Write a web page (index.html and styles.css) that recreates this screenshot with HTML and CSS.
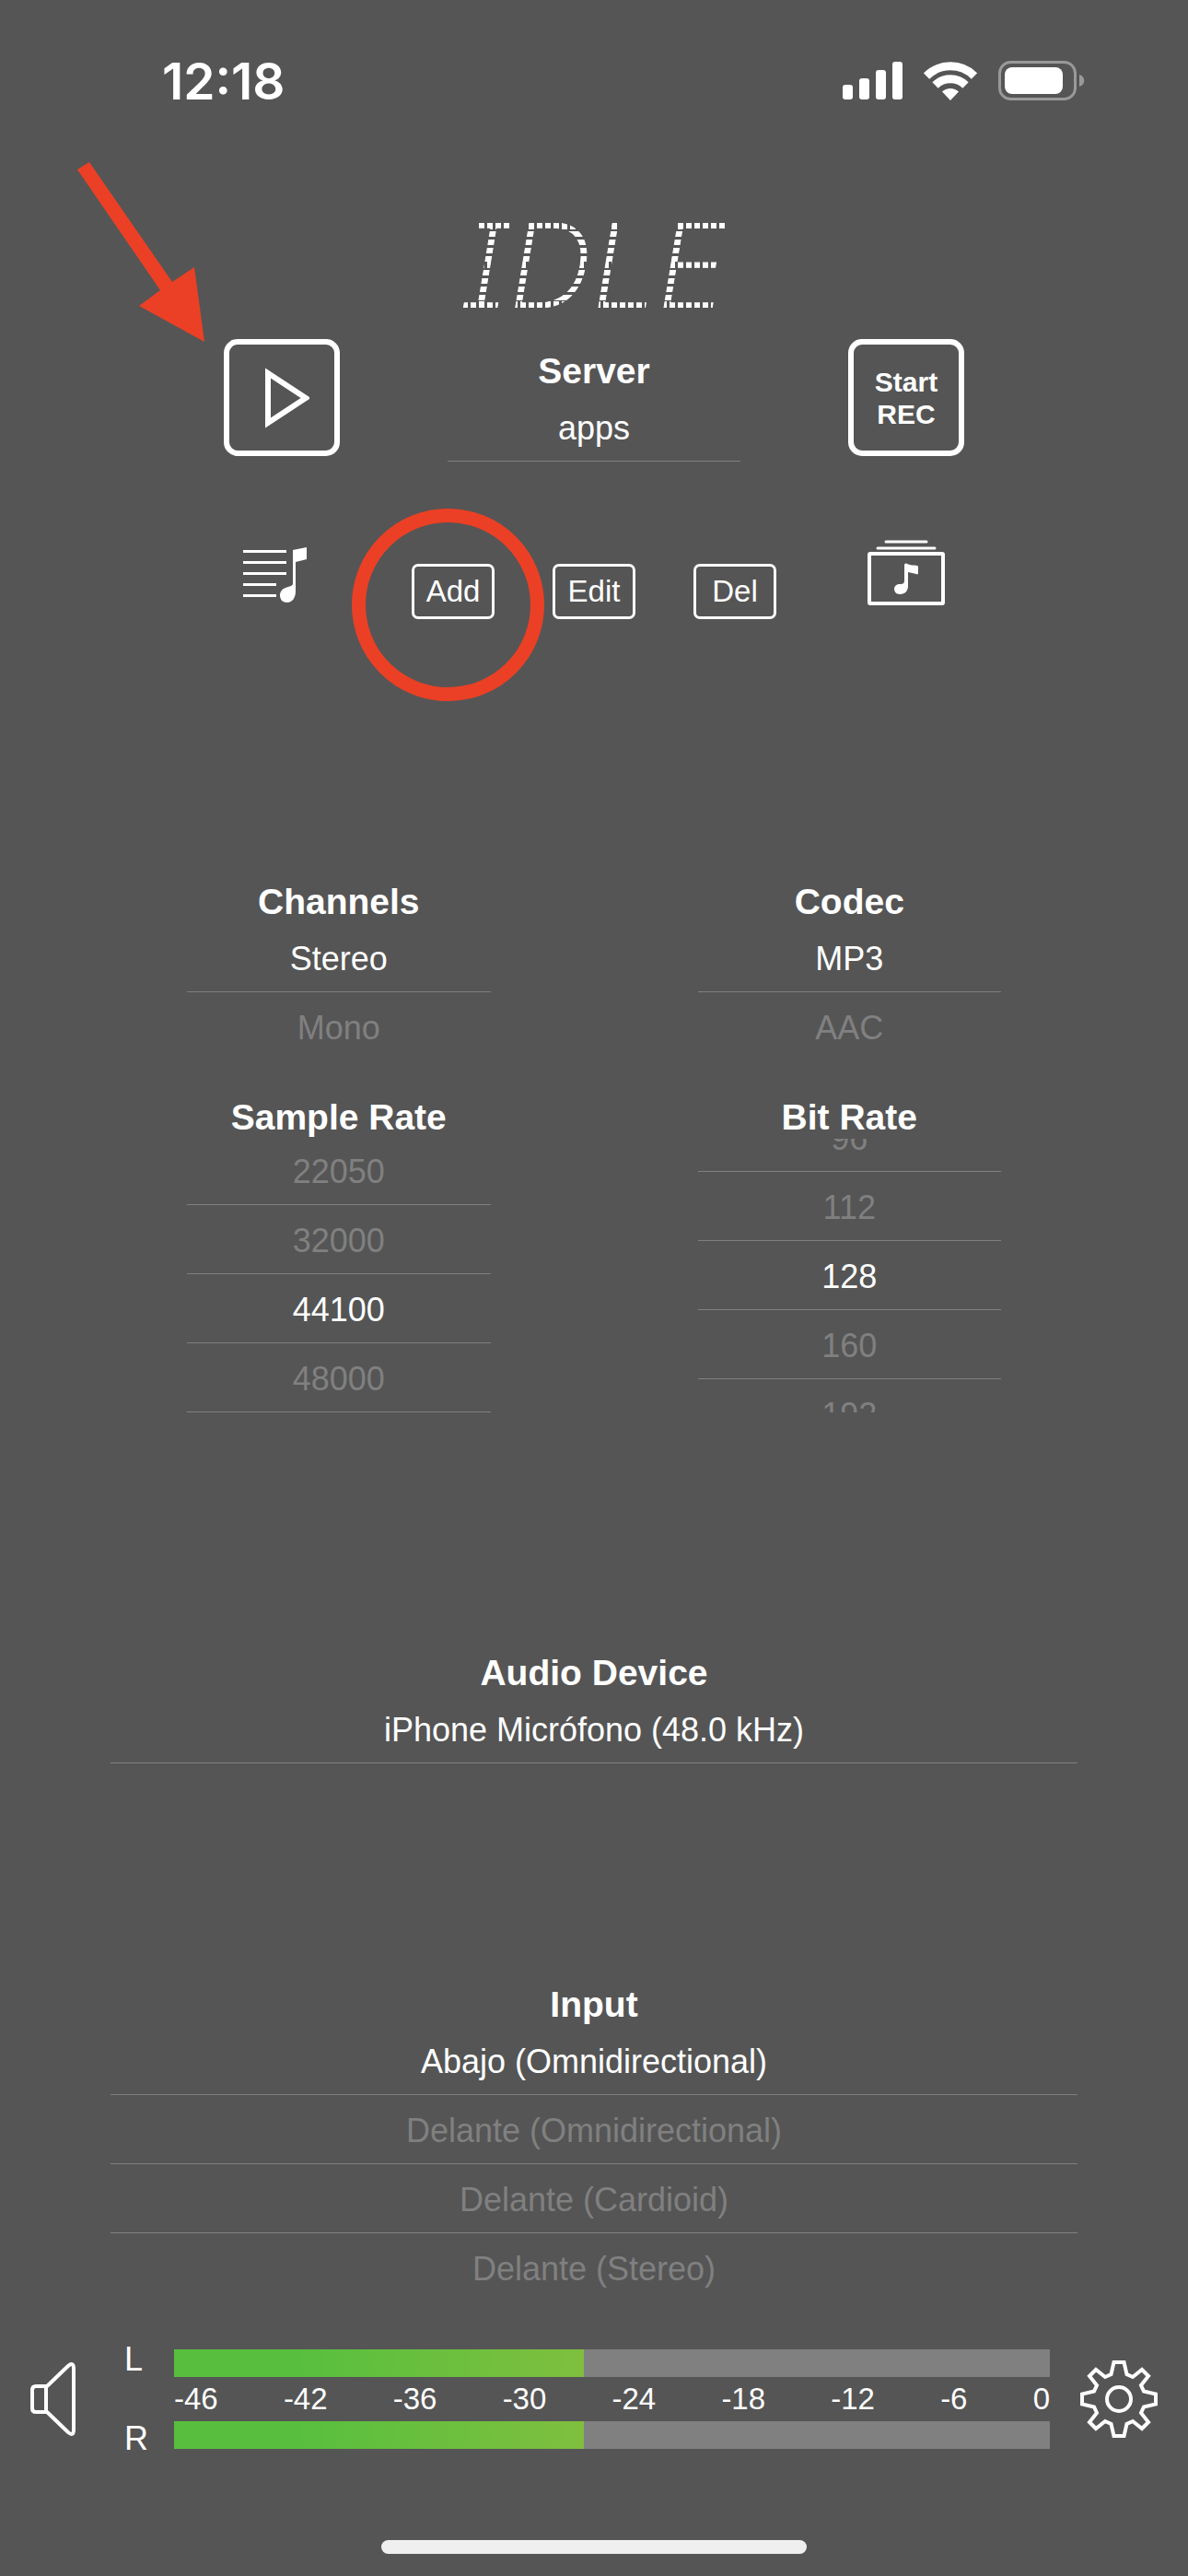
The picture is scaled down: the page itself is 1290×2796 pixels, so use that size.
FILE: index.html
```html
<!DOCTYPE html>
<html lang="es">
<head>
    <meta charset="UTF-8">
    <meta name="viewport" content="width=device-width, initial-scale=1.0">
    <title>Broadcast</title>
    <link rel="stylesheet" href="styles.css">
</head>
<body>
    <header class="status-bar">
        <span class="time">12:18</span>
        <div class="status-icons">
            <svg width="65" height="42" viewBox="0 0 65 42" fill="#fff">
                <rect x="0" y="25" width="11" height="16" rx="3"/>
                <rect x="18" y="18" width="11" height="23" rx="3"/>
                <rect x="36" y="9" width="11" height="32" rx="3"/>
                <rect x="54" y="0" width="11" height="41" rx="3"/>
            </svg>
            <svg width="58" height="42" viewBox="0 0 58 42">
                <path d="M3 15.5a37 37 0 0 1 52 0M12.5 25.500a23.5 23.5 0 0 1 33 0" fill="none" stroke="#fff" stroke-width="9"/>
                <path d="M29 42l-9-9.500a13 13 0 0 1 18 0z" fill="#fff"/>
            </svg>
            <svg width="94" height="44" viewBox="0 0 94 44">
                <rect x="1.5" y="1.5" width="82" height="40" rx="12" fill="none" stroke="#999" stroke-width="3"/>
                <rect x="7" y="7" width="63" height="29" rx="8" fill="#fff"/>
                <path d="M88 15c7 2 7 11 0 13z" fill="#999"/>
            </svg>
        </div>
    </header>

    <main>
        <h1 class="display"><span>IDLE</span></h1>

        <section class="transport">
            <button class="square-button" aria-label="Play">
                <svg width="60" height="70" viewBox="0 0 60 70" fill="none" stroke="#fff" stroke-width="6">
                    <path d="M15 8v54l41-27z"/>
                </svg>
            </button>
            <div class="server">
                <h2 id="server">Server</h2>
                <ul class="picker one-row" role="listbox" aria-labelledby="server">
                    <li class="selected" role="option" aria-selected="true">apps</li>
                </ul>
            </div>
            <button class="square-button">Start<br>REC</button>
        </section>

        <section class="actions">
            <button aria-label="Playlist">
                <svg width="84" height="72" viewBox="0 0 84 72">
                    <path d="M0 12.5h47M0 24.5h47M0 36.5h47M0 48.5h36M0 60.5h36" stroke="#fff" stroke-width="3"/>
                    <path d="M54 11l15-3v13l-12 3v32c0 7-4 12-9 12s-8-3-8-8 4-8 9-9c4-1 5-2 5-4z" fill="#fff"/>
                </svg>
            </button>
            <div class="server-buttons">
                <button>Add</button>
                <button>Edit</button>
                <button>Del</button>
            </div>
            <button aria-label="Library">
                <svg width="84" height="72" viewBox="0 0 84 72">
                    <path d="M20 2h44M11 9h62" stroke="#fff" stroke-width="3" stroke-linecap="round"/>
                    <rect x="2" y="15" width="80" height="54" rx="1" fill="none" stroke="#fff" stroke-width="4"/>
                    <path d="M40 28c0-2 1-3 3-2 4 2 7 1 11 2 1 0 1 1 1 3v5c0 1-1 2-2 1-3-1-6-1-9-2v15c0 5-3 9-9 9-4 0-6-3-6-6s3-5 6-5c4 0 5-1 5-4z" fill="#fff"/>
                </svg>
            </button>
        </section>

        <section class="settings">
            <div>
                <h2 id="channels">Channels</h2>
                <ul class="picker two-rows" role="listbox" aria-labelledby="channels">
                    <li class="selected" role="option" aria-selected="true">Stereo</li>
                    <li role="option">Mono</li>
                </ul>
            </div>
            <div>
                <h2 id="codec">Codec</h2>
                <ul class="picker two-rows" role="listbox" aria-labelledby="codec">
                    <li class="selected" role="option" aria-selected="true">MP3</li>
                    <li role="option">AAC</li>
                </ul>
            </div>
            <div>
                <h2 id="sample-rate">Sample Rate</h2>
                <ul class="picker scrolled-end" role="listbox" aria-labelledby="sample-rate">
                    <li role="option">22050</li>
                    <li role="option">32000</li>
                    <li class="selected" role="option" aria-selected="true">44100</li>
                    <li role="option">48000</li>
                </ul>
            </div>
            <div>
                <h2 id="bit-rate">Bit Rate</h2>
                <ul class="picker scrolled-middle" role="listbox" aria-labelledby="bit-rate">
                    <li role="option">96</li>
                    <li role="option">112</li>
                    <li class="selected" role="option" aria-selected="true">128</li>
                    <li role="option">160</li>
                    <li role="option">192</li>
                </ul>
            </div>
        </section>

        <section class="device">
            <h2 id="audio-device">Audio Device</h2>
            <ul class="picker" role="listbox" aria-labelledby="audio-device">
                <li class="selected" role="option" aria-selected="true">iPhone Micrófono (48.0 kHz)</li>
            </ul>
            <h2 id="input">Input</h2>
            <ul class="picker" role="listbox" aria-labelledby="input">
                <li class="selected" role="option" aria-selected="true">Abajo (Omnidirectional)</li>
                <li role="option">Delante (Omnidirectional)</li>
                <li role="option">Delante (Cardioid)</li>
                <li role="option">Delante (Stereo)</li>
            </ul>
        </section>
    </main>

    <footer class="levels">
        <button aria-label="Monitor">
            <svg width="50" height="84" viewBox="0 0 50 84" fill="none" stroke="#fff" stroke-width="4" stroke-linejoin="round">
                <path d="M17 28H6q-4 0-4 4v20q0 4 4 4h11z"/>
                <path d="M17 29L41 6q6-5 6 3v66q0 8-6 3L17 55"/>
            </svg>
        </button>
        <div class="level-labels">
            <span>L</span>
            <span>R</span>
        </div>
        <div class="level-bars">
            <div class="bar" role="meter" aria-label="L" aria-valuemin="-46" aria-valuemax="0" aria-valuenow="-27"><div class="bar-fill" style="width: 46.8%"></div></div>
            <div class="scale">
                <span>-46</span>
                <span>-42</span>
                <span>-36</span>
                <span>-30</span>
                <span>-24</span>
                <span>-18</span>
                <span>-12</span>
                <span>-6</span>
                <span>0</span>
            </div>
            <div class="bar" role="meter" aria-label="R" aria-valuemin="-46" aria-valuemax="0" aria-valuenow="-27"><div class="bar-fill" style="width: 46.8%"></div></div>
        </div>
        <button aria-label="Settings">
            <svg width="84" height="84" viewBox="-42 -42 84 84" fill="none" stroke="#fff" stroke-width="4">
                <path d="M-5.5-40h11l3 13 6.5 3 10-8 7 7-8 10 3 6.5 13 3v11l-13 3-3 6.5 8 10-7 7-10-8-6.5 3-3 13h-11l-3-13-6.5-3-10 8-7-7 8-10-3-6.5-13-3v-11l13-3 3-6.5-8-10 7-7 10 8 6.5-3z"/>
                <circle r="13"/>
            </svg>
        </button>
    </footer>
    <div class="home-indicator"></div>

    <!-- hand-drawn marks over the screen -->
    <svg class="mark-arrow" width="138" height="195" viewBox="0 0 138 195" fill="#eb4025">
        <path d="M0 8L13 0 103 130 127 114 138 195 67 156 90 139z"/>
    </svg>
    <div class="mark-circle"></div>
</body>
</html>
```
FILE: styles.css
```css
* {
    box-sizing: border-box;
}

body {
    margin: 0;
    position: relative;
    min-height: 100vh;
    background-color: #555;
    color: #fff;
    font-family: "Liberation Sans", Arial, Helvetica, sans-serif;
    font-size: 36px;
    display: flex;
    flex-direction: column;
}

h1, h2, ul {
    margin: 0;
    padding: 0;
}

svg {
    display: block;
}

button {
    margin: 0;
    padding: 0;
    background: none;
    border: none;
    color: inherit;
    font-family: inherit;
    cursor: pointer;
}

.status-bar {
    height: 176px;
    padding: 0 112px 0 176px;
    display: flex;
    align-items: center;
    justify-content: space-between;
}

.time {
    font-family: Inter, sans-serif;
    font-size: 55px;
    font-weight: 600;
}

.status-icons {
    display: flex;
    align-items: center;
    gap: 23px;
}

/* dot matrix look: the letters are cut by stripes */
.display {
    margin-top: 32px;
    text-align: center;
    font-family: Inter, sans-serif;
    font-size: 126px;
    line-height: 160px;
    font-weight: 200;
    font-style: italic;
    font-feature-settings: "cv08";
}

.display span {
    display: inline-block;
    color: transparent;
    background-image:
        repeating-linear-gradient(90deg, #fff 0 6px, transparent 6px 9px),
        repeating-linear-gradient(90deg, #fff 0 6px, transparent 6px 9px),
        repeating-linear-gradient(90deg, #fff 0 6px, transparent 6px 9px),
        repeating-linear-gradient(transparent 0 3px, #fff 3px 9px),
        repeating-linear-gradient(transparent 0 3px, #fff 3px 9px);
    background-size: 100% 7px, 100% 7px, 100% 7px, 100% 36px, 100% 36px;
    background-position: 0 34px, 0 76px, 0 119px, 0 40px, 0 82px;
    background-repeat: no-repeat;
    -webkit-background-clip: text;
    background-clip: text;
    -webkit-text-stroke: 1px transparent;
}

h2 {
    font-size: 39px;
    line-height: 46px;
    text-align: center;
}

.transport,
.actions {
    padding: 0 126px;
    display: grid;
    grid-template-columns: 1fr 318px 1fr;
    justify-items: center;
    align-items: start;
}

.square-button {
    width: 126px;
    height: 127px;
    border: 6px solid #fff;
    border-radius: 15px;
    font-size: 30px;
    line-height: 35px;
    font-weight: bold;
    display: flex;
    align-items: center;
    justify-content: center;
}

.server {
    width: 100%;
    padding-top: 12px;
}

.picker {
    height: 297px;
    overflow: hidden;
    list-style: none;
    display: flex;
    flex-direction: column;
}

.picker.one-row {
    height: 75px;
}

.picker.two-rows {
    height: 148px;
}

.picker.scrolled-end {
    justify-content: flex-end;
}

.picker.scrolled-middle {
    justify-content: center;
}

.picker li {
    flex: none;
    padding-top: 3px;
    border-bottom: 1px solid #808080;
    line-height: 71px;
    text-align: center;
    color: #808080;
}

.picker li.selected {
    color: #fff;
}

.actions {
    margin-top: 85px;
}

.server-buttons {
    padding-top: 26px;
    display: flex;
    gap: 63px;
}

.server-buttons button {
    width: 90px;
    height: 60px;
    border: 3px solid #fff;
    border-radius: 7px;
    font-size: 33px;
}

.settings {
    margin-top: 284px;
    padding: 0 203px;
    display: grid;
    grid-template-columns: 1fr 1fr;
    gap: 40px 225px;
}

.device {
    margin-top: 260px;
    padding: 0 120px;
}

.device .picker + h2 {
    margin-top: 17px;
}

.levels {
    margin-top: 42px;
    padding: 0 33px;
    display: flex;
    align-items: center;
}

.level-labels {
    width: 28px;
    height: 132px;
    margin: 0 26px 0 52px;
    display: flex;
    flex-direction: column;
    justify-content: space-between;
    font-size: 36px;
    line-height: 46px;
}

.level-bars {
    flex: 1;
    margin-right: 33px;
}

.bar {
    height: 30px;
    background-color: #808080;
}

.bar-fill {
    height: 100%;
    background: linear-gradient(90deg, #58bf3e 30%, #7fbf3e);
}

.scale {
    display: flex;
    justify-content: space-between;
    font-size: 33px;
    line-height: 48px;
}

.home-indicator {
    width: 462px;
    height: 15px;
    margin: 87px auto 24px;
    border-radius: 8px;
    background-color: #efefef;
}

.mark-arrow {
    position: absolute;
    top: 176px;
    left: 84px;
}

.mark-circle {
    position: absolute;
    top: 552px;
    left: 382px;
    width: 209px;
    height: 209px;
    border: 15px solid #eb4025;
    border-radius: 50%;
}
```
